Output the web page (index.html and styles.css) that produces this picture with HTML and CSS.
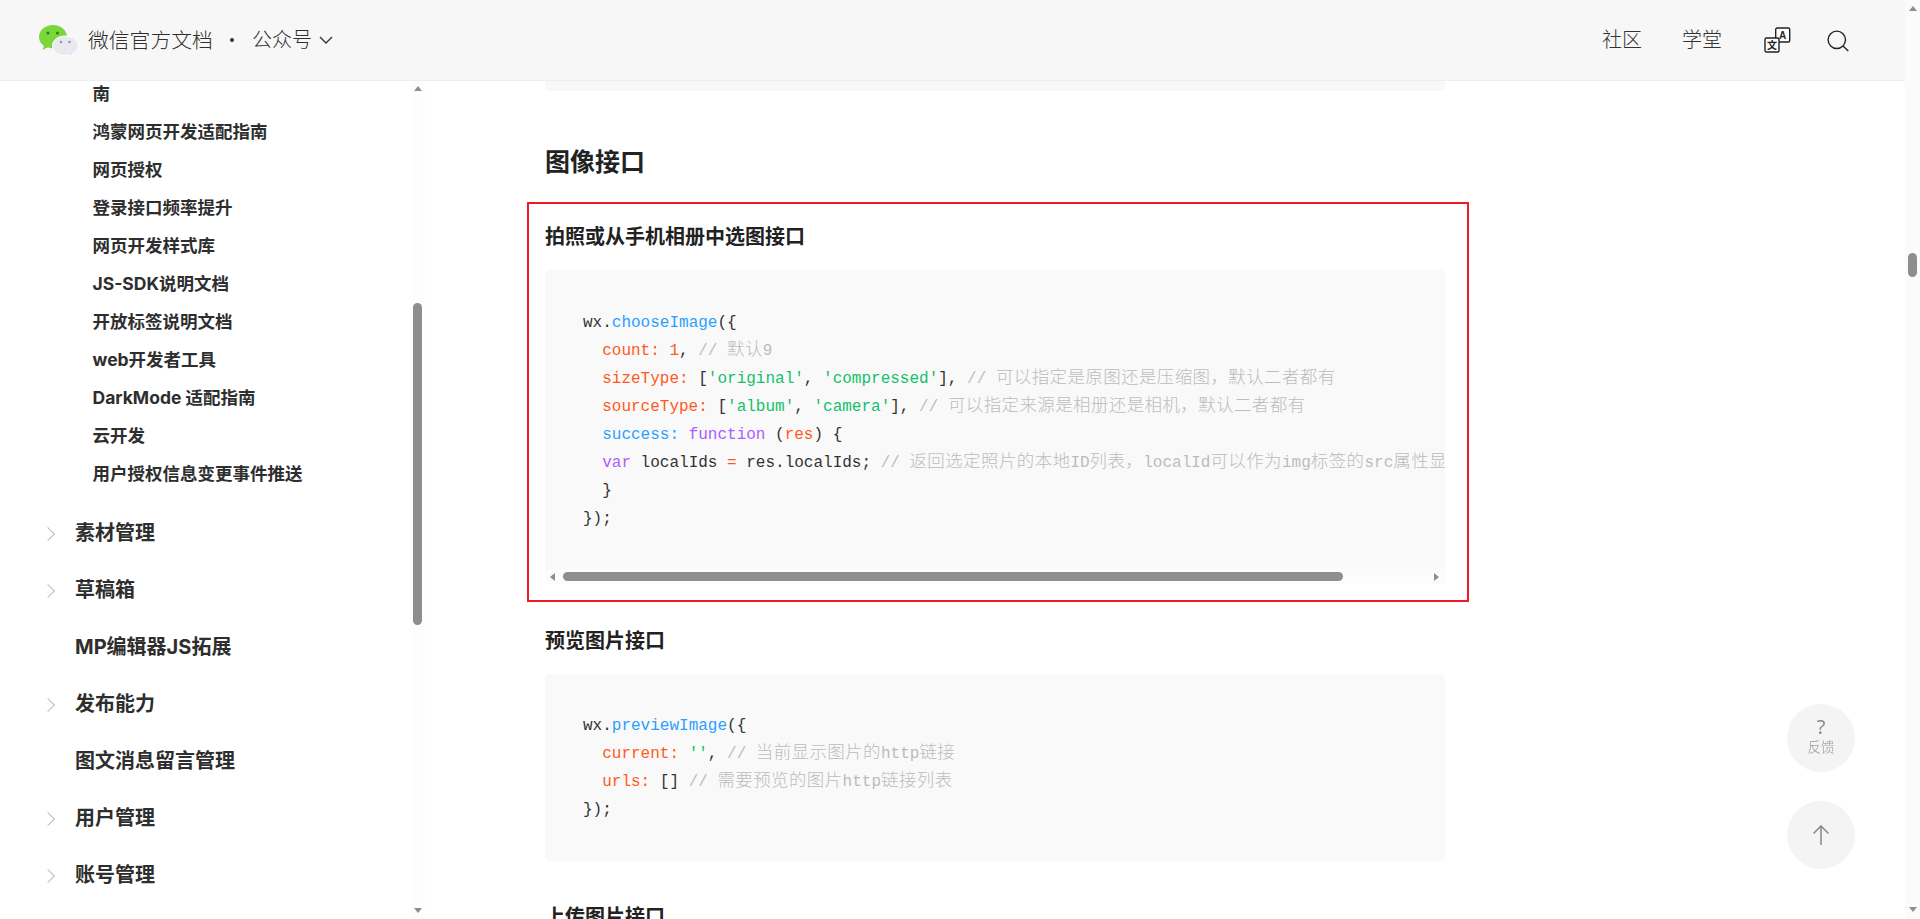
FILE: index.html
```html
<!DOCTYPE html>
<html lang="zh-CN">
<head>
<meta charset="utf-8">
<title>微信官方文档</title>
<link rel="stylesheet" href="styles.css">
</head>
<body>
<div class="app">
  <header class="topbar">
    <div class="brand">
      <svg class="logo" width="42" height="34" viewBox="0 0 42 34">
        <path d="M15 1C7 1 1 6 1 13c0 4 2 7 5 9l-1.500 4 5-2.500c2 .6 3.500.8 5.500.8 8 0 14-4.800 14-11.300S23 1 15 1z" fill="#7bd63c"/>
        <circle cx="10" cy="9" r="1.500" fill="#2f7d1c"/>
        <circle cx="19.500" cy="9" r="1.500" fill="#2f7d1c"/>
        <path d="M27 12c-7 0-12.500 4.300-12.500 9.800S20 31.500 27 31.500c1.500 0 2.800-.2 4-.6l4.500 2.600-1-3.800c3.500-1.800 5.800-4.700 5.800-8 0-5.400-5.800-9.700-13-9.700z" fill="#e9eaef" stroke="#fff" stroke-width="1"/>
        <circle cx="23" cy="18" r="1.200" fill="#8d8f96"/>
        <circle cx="31.500" cy="18" r="1.200" fill="#8d8f96"/>
      </svg>
      <span class="brand-name">微信官方文档</span>
      <span class="brand-dot"></span>
      <span class="brand-sub">公众号</span>
      <svg class="brand-chev" width="14" height="8" viewBox="0 0 14 8"><path d="M1 1l6 6 6-6" fill="none" stroke="#333" stroke-width="1.400"/></svg>
    </div>
    <nav class="topnav">
      <a class="nav-link">社区</a>
      <a class="nav-link">学堂</a>
      <svg class="nav-lang" width="27" height="27" viewBox="0 0 27 27">
        <rect x="11.700" y="1" width="14" height="14" rx="1.500" fill="#fff" stroke="#222" stroke-width="1.400"/>
        <text x="18.700" y="12" class="lang-a" text-anchor="middle">A</text>
        <rect x="1" y="11" width="14" height="14" rx="1.500" fill="#fff" stroke="#222" stroke-width="1.400"/>
        <text x="8" y="22" class="lang-z" text-anchor="middle">文</text>
      </svg>
      <svg class="nav-search" width="22" height="22" viewBox="0 0 22 22">
        <circle cx="9.800" cy="9.800" r="8.700" fill="none" stroke="#222" stroke-width="1.400"/>
        <path d="M16 16l5.300 5" stroke="#222" stroke-width="1.400" fill="none"/>
      </svg>
    </nav>
  </header>
  <div class="body-row">
    <aside class="sidebar">
      <ul class="tree">
        <li class="sub">南</li>
        <li class="sub">鸿蒙网页开发适配指南</li>
        <li class="sub">网页授权</li>
        <li class="sub">登录接口频率提升</li>
        <li class="sub">网页开发样式库</li>
        <li class="sub">JS-SDK说明文档</li>
        <li class="sub">开放标签说明文档</li>
        <li class="sub">web开发者工具</li>
        <li class="sub">DarkMode 适配指南</li>
        <li class="sub">云开发</li>
        <li class="sub sub-last">用户授权信息变更事件推送</li>
        <li class="top has-kids">素材管理</li>
        <li class="top has-kids">草稿箱</li>
        <li class="top">MP编辑器JS拓展</li>
        <li class="top has-kids">发布能力</li>
        <li class="top">图文消息留言管理</li>
        <li class="top has-kids">用户管理</li>
        <li class="top has-kids">账号管理</li>
      </ul>
      <div class="side-scroll">
        <span class="arrow-up"></span>
        <span class="side-thumb"></span>
        <span class="arrow-down"></span>
      </div>
    </aside>
    <main class="main">
      <div class="content">
        <div class="code-tail"></div>
        <h2 class="h2">图像接口</h2>
        <section class="highlight">
          <h3 class="h3 h3-first">拍照或从手机相册中选图接口</h3>
          <pre class="code code-a">wx.<span class="fn">chooseImage</span>({
  <span class="at">count:</span> <span class="at">1</span>, <span class="cm">// <span class="cj">默认</span>9</span>
  <span class="at">sizeType:</span> [<span class="st">'original'</span>, <span class="st">'compressed'</span>], <span class="cm">// <span class="cj">可以指定是原图还是压缩图，默认二者都有</span></span>
  <span class="at">sourceType:</span> [<span class="st">'album'</span>, <span class="st">'camera'</span>], <span class="cm">// <span class="cj">可以指定来源是相册还是相机，默认二者都有</span></span>
  <span class="fn">success:</span> <span class="kw">function</span> (<span class="at">res</span>) {
  <span class="kw">var</span> localIds <span class="at">=</span> res.localIds; <span class="cm">// <span class="cj">返回选定照片的本地</span>ID<span class="cj">列表，</span>localId<span class="cj">可以作为</span>img<span class="cj">标签的</span>src<span class="cj">属性显示图片</span></span>
  }
});</pre>
          <div class="hscroll">
            <span class="arrow-left"></span>
            <span class="hthumb"></span>
            <span class="arrow-right"></span>
          </div>
        </section>
        <h3 class="h3 h3-next">预览图片接口</h3>
        <pre class="code code-b">wx.<span class="fn">previewImage</span>({
  <span class="at">current:</span> <span class="st">''</span>, <span class="cm">// <span class="cj">当前显示图片的</span>http<span class="cj">链接</span></span>
  <span class="at">urls:</span> [] <span class="cm">// <span class="cj">需要预览的图片</span>http<span class="cj">链接列表</span></span>
});</pre>
        <h3 class="h3 h3-last">上传图片接口</h3>
      </div>
      <div class="float-btn float-help"><span class="q">?</span><span class="q-label">反馈</span></div>
      <div class="float-btn float-top">
        <svg width="18" height="20" viewBox="0 0 18 20"><path d="M9 20V1M1.500 8.500L9 1l7.500 7.500" fill="none" stroke="#888" stroke-width="1.500"/></svg>
      </div>
    </main>
  </div>
</div>
<div class="page-scroll">
  <span class="arrow-up"></span>
  <span class="page-thumb"></span>
  <span class="arrow-down"></span>
</div>
</body>
</html>
```
FILE: styles.css
```css
* { box-sizing: border-box; }
html, body { height: 100%; }
body {
  margin: 0;
  display: flex;
  overflow: hidden;
  background: #fff;
  color: #333;
  font-family: "Noto Sans", "Noto Sans CJK SC", sans-serif;
}
.app { flex: 1; min-width: 0; display: flex; flex-direction: column; }

/* top bar */
.topbar {
  height: 81px;
  flex: none;
  display: flex;
  align-items: center;
  justify-content: space-between;
  padding: 0 56px 0 38px;
  background: #f7f7f7;
  border-bottom: 1px solid #eeeeee;
}
.brand { display: flex; align-items: center; color: #2f2f2f; }
.logo { margin-right: 8px; position: relative; top: 1px; }
.brand-name { font-size: 20.800px; font-weight: 300; line-height: 30px; width: 125px; }
.brand-dot { width: 4px; height: 4px; border-radius: 50%; background: #333; margin: 0 18px 0 17px; }
.brand-sub { font-size: 20px; font-weight: 300; line-height: 30px; margin-right: 7px; color: #2f2f2f; }
.topnav { display: flex; align-items: center; }
.nav-link { font-size: 20px; line-height: 30px; color: #333; font-weight: 300; margin-right: 40px; }
.nav-link + .nav-link { margin-right: 42px; }
.nav-lang { margin-right: 36px; position: relative; top: 0; }
.nav-search { position: relative; top: 1px; }
.lang-a { font: 700 10px "Liberation Sans", sans-serif; fill: #222; }
.lang-z { font: 700 10px "Noto Sans CJK SC", sans-serif; fill: #222; }

.body-row { flex: 1; min-height: 0; display: flex; }

/* sidebar */
.sidebar { width: 425px; flex: none; display: flex; overflow: hidden; }
.tree {
  flex: 1;
  min-width: 0;
  list-style: none;
  margin: -6px 0 0;
  padding: 0;
  color: #2e2e2e;
  font-family: Inter, "Noto Sans CJK SC", sans-serif;
  font-weight: 700;
}
.sub { height: 38px; line-height: 38px; padding-left: 92.500px; font-size: 17.500px; }
.sub-last { margin-bottom: 12px; }
.top {
  position: relative;
  height: 57px;
  line-height: 57px;
  padding-left: 75px;
  font-size: 20px;
}
.top.has-kids::before {
  content: "";
  position: absolute;
  left: 42.500px;
  top: 24px;
  width: 9px;
  height: 9px;
  border-top: 1.500px solid #bdbdbd;
  border-right: 1.500px solid #bdbdbd;
  transform: rotate(45deg);
}
.side-scroll {
  width: 15px;
  flex: none;
  padding: 5px 3px 6px 3px;
  display: flex;
  flex-direction: column;
  align-items: center;
  background: #fdfdfd;
}
.side-thumb { width: 9px; height: 322px; margin-top: 212px; margin-bottom: auto; background: #8e8e8e; border-radius: 4.500px; }

/* main */
.main { flex: 1; min-width: 0; overflow: hidden; }
.content { width: 900px; margin-left: 120px; }
.code-tail { height: 10px; background: #f8f8f8; border-radius: 0 0 5px 5px; }
.h2 { margin: 53px 0 24px; font-size: 25px; line-height: 34px; font-weight: 700; color: #222; }
.h3 { margin: 0; font-size: 20px; line-height: 32px; font-weight: 700; color: #222; }
.h3-first { margin-bottom: 17px; }
.h3-next { margin: 23px 0 17px; }
.h3-last { margin-top: 40px; }
.highlight {
  margin: 0 -24px 0 -18px;
  padding: 17px 22px 16px 16px;
  border: 2px solid #ed1c24;
}
.code {
  margin: 0;
  white-space: pre;
  overflow: hidden;
  background: #f9f9f9;
  font-family: "Liberation Mono", "Noto Sans CJK SC", monospace;
  font-size: 16px;
  line-height: 28px;
  color: #333;
  padding-left: 38px;
}
.code-a { padding-top: 39px; padding-bottom: 36px; border-radius: 5px 5px 0 0; }
.code-b { padding-top: 38px; padding-bottom: 37px; border-radius: 5px; }
.fn { color: #2b9fff; }
.at { color: #ff5a1e; }
.st { color: #14c06c; }
.kw { color: #ac5dff; }
.cm { color: #bcbcbc; }
.cj { font-family: "Noto Sans CJK SC", sans-serif; font-size: 17.500px; letter-spacing: 0.380px; line-height: 0; font-weight: 300; }

/* fake scrollbars */
.hscroll {
  height: 15px;
  display: flex;
  align-items: center;
  padding: 0 6px 0 5px;
  background: #fcfcfc;
}
.hthumb { width: 780px; height: 9px; margin-left: 8px; margin-right: auto; background: #8e8e8e; border-radius: 4.500px; }
.arrow-up, .arrow-down, .arrow-left, .arrow-right { flex: none; width: 0; height: 0; border-style: solid; border-color: transparent; }
.arrow-up { border-width: 0 4.500px 5px; border-bottom-color: #8e8e8e; }
.arrow-down { border-width: 5px 4.500px 0; border-top-color: #8e8e8e; }
.arrow-left { border-width: 4.500px 5px 4.500px 0; border-right-color: #8e8e8e; }
.arrow-right { border-width: 4.500px 0 4.500px 5px; border-left-color: #8e8e8e; }
.page-scroll {
  width: 15px;
  flex: none;
  padding: 6px 0 7px;
  display: flex;
  flex-direction: column;
  align-items: center;
  background: #fbfbfb;
}
.page-thumb { width: 9px; height: 24px; margin-top: 242px; margin-bottom: auto; background: #8e8e8e; border-radius: 4.500px; }

/* floating buttons */
.float-btn {
  position: fixed;
  left: 1787px;
  width: 68px;
  height: 68px;
  border-radius: 50%;
  background: #f4f4f4;
  display: flex;
  flex-direction: column;
  align-items: center;
  justify-content: center;
}
.float-help { top: 704px; padding-bottom: 2px; }
.float-top { top: 801px; }
.q { font-size: 20px; line-height: 20px; color: #888; }
.q-label { font-size: 13.500px; line-height: 20px; color: #999; font-weight: 300; }
```
